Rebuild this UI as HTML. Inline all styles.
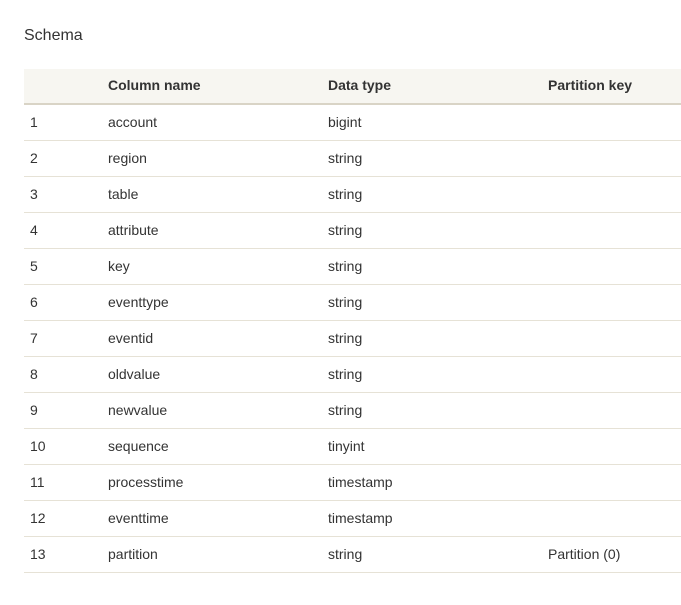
<!DOCTYPE html>
<html><head><style>
body{margin:0;background:#fff;font-family:"Liberation Sans",Arial,sans-serif;color:#333;font-size:14px;}
h2{position:absolute;left:24px;top:27px;margin:0;font-weight:normal;font-size:16px;color:#333;}
table{position:absolute;left:24px;top:69px;width:657px;border-collapse:collapse;}
th{background:#f7f6f1;height:32px;text-align:left;font-weight:bold;border-bottom:2px solid #d9d4c6;padding:0 0 2px 0;}
td{height:33px;border-bottom:1px solid #e6e2d6;padding:0 0 2px 0;}
td:first-child,th:first-child{padding-left:6px;width:78px;}
.c2{width:220px}.c3{width:220px}
</style></head><body>
<h2>Schema</h2>
<table>
<tr><th></th><th class="c2">Column name</th><th class="c3">Data type</th><th>Partition key</th></tr>
<tr><td>1</td><td>account</td><td>bigint</td><td></td></tr>
<tr><td>2</td><td>region</td><td>string</td><td></td></tr>
<tr><td>3</td><td>table</td><td>string</td><td></td></tr>
<tr><td>4</td><td>attribute</td><td>string</td><td></td></tr>
<tr><td>5</td><td>key</td><td>string</td><td></td></tr>
<tr><td>6</td><td>eventtype</td><td>string</td><td></td></tr>
<tr><td>7</td><td>eventid</td><td>string</td><td></td></tr>
<tr><td>8</td><td>oldvalue</td><td>string</td><td></td></tr>
<tr><td>9</td><td>newvalue</td><td>string</td><td></td></tr>
<tr><td>10</td><td>sequence</td><td>tinyint</td><td></td></tr>
<tr><td>11</td><td>processtime</td><td>timestamp</td><td></td></tr>
<tr><td>12</td><td>eventtime</td><td>timestamp</td><td></td></tr>
<tr><td>13</td><td>partition</td><td>string</td><td>Partition (0)</td></tr>
</table>
</body></html>
